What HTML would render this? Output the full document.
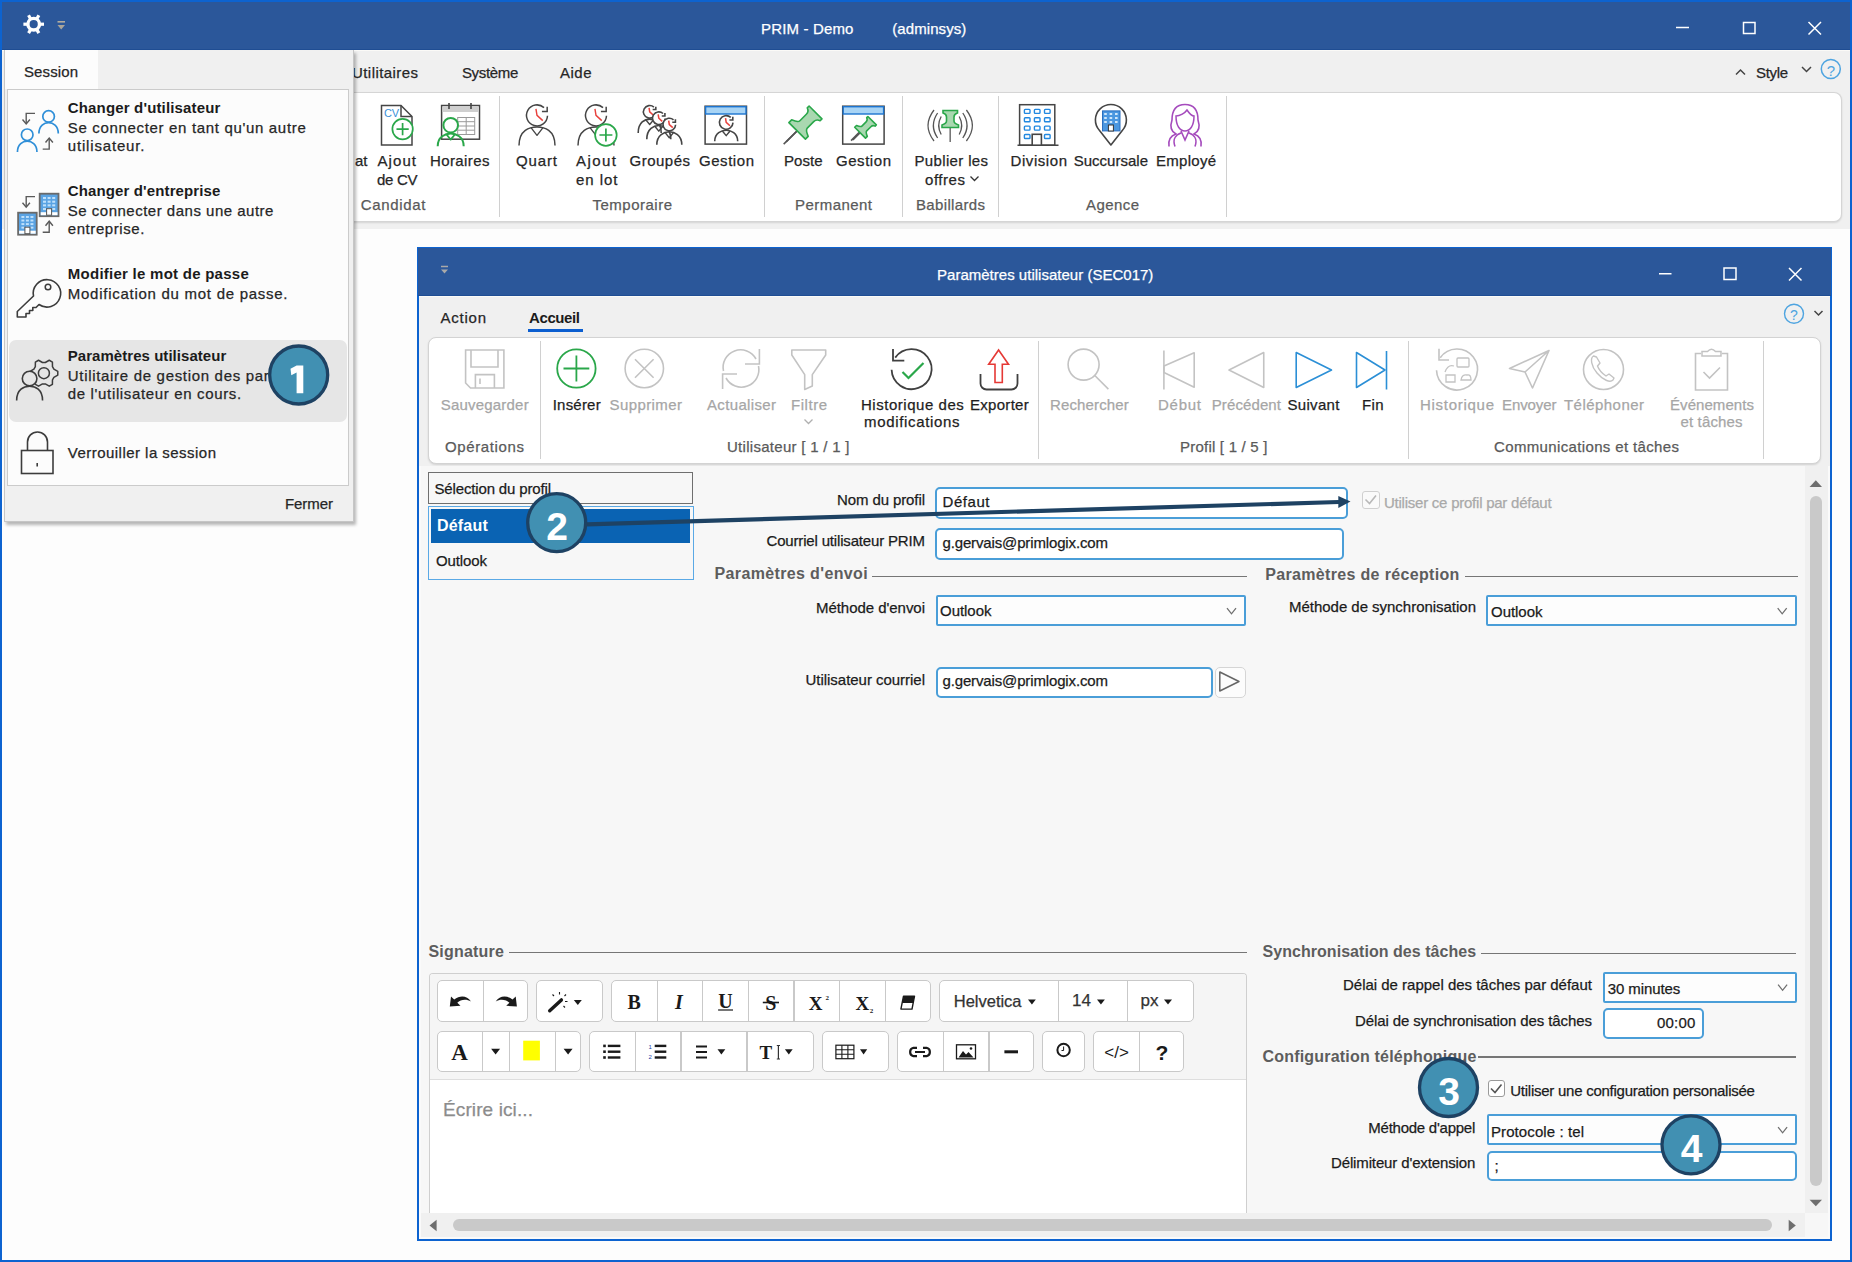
<!DOCTYPE html><html><head><meta charset="utf-8"><title>PRIM</title><style>
html,body{margin:0;padding:0;}
body{width:1852px;height:1262px;position:relative;overflow:hidden;background:#fdfdfd;font-family:"Liberation Sans",sans-serif;}
.t{position:absolute;white-space:nowrap;line-height:1;font-family:"Liberation Sans",sans-serif;}
.n{-webkit-text-stroke:0.25px currentColor;}
.r{position:absolute;box-sizing:border-box;}
.s{position:absolute;overflow:visible;}
</style></head><body>
<div class="r" style="left:0px;top:0px;width:1852px;height:1262px;background:#fdfdfd"></div>
<div class="r" style="left:0px;top:0px;width:1852px;height:50px;background:#2b579a"></div>
<div class="r" style="left:0px;top:50px;width:1852px;height:179px;background:#f0f0f0"></div>
<div class="r" style="left:0px;top:49px;width:1852px;height:1px;background:#1f4d93"></div>
<div class="r" style="left:0px;top:50px;width:1852px;height:1px;background:#fbfaf7"></div>
<div class="r" style="left:330px;top:92px;width:1512px;height:130px;background:#fff;border:1px solid #d5d5d5;border-left:none;border-radius:0 8px 8px 0;box-shadow:0 1px 2px rgba(0,0,0,.12)"></div>
<div class="t n" style="left:761.00px;top:21.30px;font-size:15px;font-weight:400;color:#fff;letter-spacing:0.154px;">PRIM - Demo</div>
<div class="t n" style="left:892.30px;top:21.30px;font-size:15px;font-weight:400;color:#fff;letter-spacing:0.071px;">(adminsys)</div>
<div class="t n" style="left:352.00px;top:64.80px;font-size:15px;font-weight:400;color:#262626;letter-spacing:0.433px;">Utilitaires</div>
<div class="t n" style="left:461.90px;top:64.80px;font-size:15px;font-weight:400;color:#262626;letter-spacing:-0.310px;">Système</div>
<div class="t n" style="left:560.00px;top:64.80px;font-size:15px;font-weight:400;color:#262626;letter-spacing:0.495px;">Aide</div>
<div class="t n" style="left:1756.00px;top:64.90px;font-size:15px;font-weight:400;color:#262626;letter-spacing:-0.336px;">Style</div>
<div class="t n" style="left:355.00px;top:153.30px;font-size:15px;font-weight:400;color:#262626;letter-spacing:0.000px;">at</div>
<div class="t n" style="left:377.50px;top:153.30px;font-size:15px;font-weight:400;color:#262626;letter-spacing:1.078px;">Ajout</div>
<div class="t n" style="left:376.90px;top:171.70px;font-size:15px;font-weight:400;color:#262626;letter-spacing:-0.272px;">de CV</div>
<div class="t n" style="left:430.00px;top:153.30px;font-size:15px;font-weight:400;color:#262626;letter-spacing:0.387px;">Horaires</div>
<div class="t n" style="left:516.00px;top:153.30px;font-size:15px;font-weight:400;color:#262626;letter-spacing:0.867px;">Quart</div>
<div class="t n" style="left:576.00px;top:153.30px;font-size:15px;font-weight:400;color:#262626;letter-spacing:1.453px;">Ajout</div>
<div class="t n" style="left:576.00px;top:171.80px;font-size:15px;font-weight:400;color:#262626;letter-spacing:0.959px;">en lot</div>
<div class="t n" style="left:629.50px;top:153.30px;font-size:15px;font-weight:400;color:#262626;letter-spacing:0.492px;">Groupés</div>
<div class="t n" style="left:699.00px;top:153.30px;font-size:15px;font-weight:400;color:#262626;letter-spacing:0.549px;">Gestion</div>
<div class="t n" style="left:784.00px;top:153.30px;font-size:15px;font-weight:400;color:#262626;letter-spacing:0.035px;">Poste</div>
<div class="t n" style="left:836.00px;top:153.30px;font-size:15px;font-weight:400;color:#262626;letter-spacing:0.549px;">Gestion</div>
<div class="t n" style="left:914.50px;top:153.30px;font-size:15px;font-weight:400;color:#262626;letter-spacing:0.347px;">Publier les</div>
<div class="t n" style="left:925.00px;top:171.80px;font-size:15px;font-weight:400;color:#262626;letter-spacing:0.547px;">offres</div>
<div class="t n" style="left:1010.50px;top:153.30px;font-size:15px;font-weight:400;color:#262626;letter-spacing:0.571px;">Division</div>
<div class="t n" style="left:1073.75px;top:153.30px;font-size:15px;font-weight:400;color:#262626;letter-spacing:0.005px;">Succursale</div>
<div class="t n" style="left:1156.00px;top:153.30px;font-size:15px;font-weight:400;color:#262626;letter-spacing:0.273px;">Employé</div>
<div class="t n" style="left:360.70px;top:196.60px;font-size:15px;font-weight:400;color:#5a5a5a;letter-spacing:0.679px;">Candidat</div>
<div class="t n" style="left:592.50px;top:196.80px;font-size:15px;font-weight:400;color:#5a5a5a;letter-spacing:0.495px;">Temporaire</div>
<div class="t n" style="left:795.00px;top:196.80px;font-size:15px;font-weight:400;color:#5a5a5a;letter-spacing:0.451px;">Permanent</div>
<div class="t n" style="left:916.00px;top:196.80px;font-size:15px;font-weight:400;color:#5a5a5a;letter-spacing:0.349px;">Babillards</div>
<div class="t n" style="left:1086.00px;top:196.80px;font-size:15px;font-weight:400;color:#5a5a5a;letter-spacing:0.425px;">Agence</div>
<div class="r" style="left:498.5px;top:96px;width:1.0px;height:121px;background:#d0d0d0"></div>
<div class="r" style="left:764px;top:96px;width:1px;height:121px;background:#d0d0d0"></div>
<div class="r" style="left:902px;top:96px;width:1px;height:121px;background:#d0d0d0"></div>
<div class="r" style="left:998px;top:96px;width:1px;height:121px;background:#d0d0d0"></div>
<div class="r" style="left:1225.5px;top:96px;width:1.0px;height:121px;background:#d0d0d0"></div>
<svg class="s" style="left:0;top:0" width="1852" height="1262"><path d="M381.5,105.5 H401 L412,116.5 V145 H381.5 Z" fill="#fff" stroke="#454545" stroke-width="1.5"/><path d="M401,105.5 V116.5 H412" fill="none" stroke="#454545" stroke-width="1.5"/><text x="384" y="117" font-family="Liberation Sans" font-size="11" fill="#3b8fd8" textLength="15">CV</text><circle cx="402.6" cy="129.1" r="10.2" fill="#fff" stroke="#2aa74a" stroke-width="1.7"/><path d="M396.48,129.1 H408.72 M402.6,122.97999999999999 V135.22" stroke="#2aa74a" stroke-width="1.7"/><rect x="441.6" y="105.5" width="37.9" height="33.7" fill="#fff" stroke="#454545" stroke-width="1.5"/><rect x="442.5" y="106.5" width="36" height="5.5" fill="#cfcfcf"/><path d="M449,103 V109 M471,103 V109" stroke="#454545" stroke-width="1.6"/><rect x="457.7" y="117.5" width="17" height="17" fill="#fff" stroke="#9a9a9a" stroke-width="1"/><path d="M466.2,117.5 V134.5 M457.7,121.7 H474.7 M457.7,126 H474.7 M457.7,130.2 H474.7" stroke="#9a9a9a" stroke-width="1"/><circle cx="450.7" cy="125.2" r="7.3" fill="#fff" stroke="#2aa74a" stroke-width="2"/><path d="M437.7,146.2 C437.7,136.5 445.5,133.5 450.7,133.5 C455.9,133.5 463.7,136.5 463.7,146.2" fill="none" stroke="#2aa74a" stroke-width="2"/><path d="M446.358,134.3 L450.7,139.636 L455.042,134.3" fill="none" stroke="#2aa74a" stroke-width="1.8" stroke-linejoin="round"/><circle cx="537" cy="115.4" r="10.5" fill="#fff" stroke="none"/><path d="M547.49,115.77 A10.5,10.5 0 1 1 544.03,107.60" fill="none" stroke="#454545" stroke-width="1.5"/><path d="M547.18,106.79 V111.62 H541.93" fill="none" stroke="#454545" stroke-width="1.5"/><path d="M535.95,108.89 L537.00,115.40 L542.77,120.65" fill="none" stroke="#e8413c" stroke-width="1.4249999999999998"/><path d="M519.0,145.5 C519.0,129.9 529.8,126.9 537,126.9 C544.2,126.9 555.0,129.9 555.0,145.5" fill="none" stroke="#454545" stroke-width="1.5"/><path d="M530.988,127.7 L537,135.39600000000002 L543.012,127.7" fill="none" stroke="#454545" stroke-width="1.35" stroke-linejoin="round"/><circle cx="596" cy="115.4" r="10.5" fill="#fff" stroke="none"/><path d="M606.49,115.77 A10.5,10.5 0 1 1 603.03,107.60" fill="none" stroke="#454545" stroke-width="1.5"/><path d="M606.18,106.79 V111.62 H600.93" fill="none" stroke="#454545" stroke-width="1.5"/><path d="M594.95,108.89 L596.00,115.40 L601.77,120.65" fill="none" stroke="#e8413c" stroke-width="1.4249999999999998"/><path d="M578.0,145.5 C578.0,129.9 588.8,126.9 596,126.9 C603.2,126.9 614.0,129.9 614.0,145.5" fill="none" stroke="#454545" stroke-width="1.5"/><path d="M589.988,127.7 L596,135.39600000000002 L602.012,127.7" fill="none" stroke="#454545" stroke-width="1.35" stroke-linejoin="round"/><circle cx="605.9" cy="135" r="10.8" fill="#fff" stroke="#2aa74a" stroke-width="1.7"/><path d="M599.42,135 H612.38 M605.9,128.52 V141.48" stroke="#2aa74a" stroke-width="1.7"/><circle cx="649.7" cy="111.8" r="6.3" fill="#fff" stroke="none"/><path d="M656.00,112.02 A6.3,6.3 0 1 1 653.92,107.12" fill="none" stroke="#454545" stroke-width="1.6"/><path d="M655.81,106.63 V109.53 H652.66" fill="none" stroke="#454545" stroke-width="1.6"/><path d="M649.07,107.89 L649.70,111.80 L653.17,114.95" fill="none" stroke="#e8413c" stroke-width="1.52"/><path d="M638.2,132.9 C638.2,122.1 645.1,119.1 649.7,119.1 C654.3000000000001,119.1 661.2,122.1 661.2,132.9" fill="none" stroke="#454545" stroke-width="1.6"/><path d="M645.859,119.89999999999999 L649.7,124.52799999999999 L653.541,119.89999999999999" fill="none" stroke="#454545" stroke-width="1.4400000000000002" stroke-linejoin="round"/><circle cx="658.8" cy="118.2" r="6.3" fill="#fff" stroke="none"/><path d="M665.10,118.42 A6.3,6.3 0 1 1 663.02,113.52" fill="none" stroke="#454545" stroke-width="1.6"/><path d="M664.91,113.03 V115.93 H661.76" fill="none" stroke="#454545" stroke-width="1.6"/><path d="M658.17,114.29 L658.80,118.20 L662.26,121.35" fill="none" stroke="#e8413c" stroke-width="1.52"/><path d="M646.8,139.2 C646.8,128.5 654.0,125.5 658.8,125.5 C663.5999999999999,125.5 670.8,128.5 670.8,139.2" fill="none" stroke="#454545" stroke-width="1.6"/><path d="M654.7919999999999,126.3 L658.8,131.164 L662.808,126.3" fill="none" stroke="#454545" stroke-width="1.4400000000000002" stroke-linejoin="round"/><circle cx="669.3" cy="124.5" r="6.3" fill="#fff" stroke="none"/><path d="M675.60,124.72 A6.3,6.3 0 1 1 673.52,119.82" fill="none" stroke="#454545" stroke-width="1.6"/><path d="M675.41,119.33 V122.23 H672.26" fill="none" stroke="#454545" stroke-width="1.6"/><path d="M668.67,120.59 L669.30,124.50 L672.76,127.65" fill="none" stroke="#e8413c" stroke-width="1.52"/><path d="M656.8,144.8 C656.8,134.8 664.3,131.8 669.3,131.8 C674.3,131.8 681.8,134.8 681.8,144.8" fill="none" stroke="#454545" stroke-width="1.6"/><path d="M665.125,132.60000000000002 L669.3,137.70000000000002 L673.4749999999999,132.60000000000002" fill="none" stroke="#454545" stroke-width="1.4400000000000002" stroke-linejoin="round"/><rect x="705.1" y="106.2" width="41.4" height="37.9" fill="#fff" stroke="#454545" stroke-width="1.5"/><rect x="705.6" y="106.7" width="40.4" height="7.3" fill="#a8d4f5" stroke="#1c74cf" stroke-width="1.4"/><circle cx="726.2" cy="122.4" r="6.8" fill="#fff" stroke="none"/><path d="M733.00,122.64 A6.8,6.8 0 1 1 730.75,117.35" fill="none" stroke="#454545" stroke-width="1.6"/><path d="M732.80,116.82 V119.95 H729.40" fill="none" stroke="#454545" stroke-width="1.6"/><path d="M725.52,118.18 L726.20,122.40 L729.94,125.80" fill="none" stroke="#e8413c" stroke-width="1.52"/><path d="M714.7,141.3 C714.7,133.20000000000002 721.6,130.20000000000002 726.2,130.20000000000002 C730.8000000000001,130.20000000000002 737.7,133.20000000000002 737.7,141.3" fill="none" stroke="#454545" stroke-width="1.6"/><path d="M722.359,131.00000000000003 L726.2,135.62800000000001 L730.041,131.00000000000003" fill="none" stroke="#454545" stroke-width="1.4400000000000002" stroke-linejoin="round"/><path d="M783.7,144.1 L797,131" stroke="#555" stroke-width="1.6"/><g transform="translate(804.5,123.5) rotate(45) scale(1.3)"><path d="M0,8 L0,20" stroke="#555" stroke-width="1.2307692307692308"/><path d="M-7,-12 H7 V-10 Q4,-9 4,-6 V1 Q4,3 9,5 V8 H-9 V5 Q-4,3 -4,1 V-6 Q-4,-9 -7,-10 Z" fill="#a9d8b0" stroke="#2aa74a" stroke-width="1.2307692307692308" stroke-linejoin="round"/></g><rect x="842.7" y="106.2" width="41.4" height="37.9" fill="#fff" stroke="#454545" stroke-width="1.5"/><rect x="843.2" y="106.7" width="40.4" height="7.3" fill="#a8d4f5" stroke="#1c74cf" stroke-width="1.4"/><path d="M851.1,140.6 L860,131.5" stroke="#555" stroke-width="1.6"/><g transform="translate(864.9,127.9) rotate(45) scale(0.85)"><path d="M0,8 L0,20" stroke="#555" stroke-width="1.8823529411764708"/><path d="M-7,-12 H7 V-10 Q4,-9 4,-6 V1 Q4,3 9,5 V8 H-9 V5 Q-4,3 -4,1 V-6 Q-4,-9 -7,-10 Z" fill="#a9d8b0" stroke="#2aa74a" stroke-width="1.8823529411764708" stroke-linejoin="round"/></g><path d="M950.2,127 V142" stroke="#777" stroke-width="1.6"/><path d="M943,110.5 H957.5 V113 Q954,114 954,117 V121 Q954,123.5 958.5,125 V127.5 H942 V125 Q946.5,123.5 946.5,121 V117 Q946.5,114 943,113 Z" fill="#a9d8b0" stroke="#2aa74a" stroke-width="1.6"/><path d="M941.2,116.5 Q936.2,125.5 941.2,134.5" fill="none" stroke="#555" stroke-width="1.3"/><path d="M959.2,116.5 Q964.2,125.5 959.2,134.5" fill="none" stroke="#555" stroke-width="1.3"/><path d="M937.6,113.0 Q929.1,125.5 937.6,138.0" fill="none" stroke="#555" stroke-width="1.3"/><path d="M962.8000000000001,113.0 Q971.3000000000001,125.5 962.8000000000001,138.0" fill="none" stroke="#555" stroke-width="1.3"/><path d="M934.0,110.0 Q922.0,125.5 934.0,141.0" fill="none" stroke="#555" stroke-width="1.3"/><path d="M966.4000000000001,110.0 Q978.4000000000001,125.5 966.4000000000001,141.0" fill="none" stroke="#555" stroke-width="1.3"/><rect x="1019.6" y="104.7" width="35.2" height="40.5" fill="#fff" stroke="#454545" stroke-width="1.5"/><path d="M1017.5,145.2 H1058.5" stroke="#454545" stroke-width="1.5"/><rect x="1024.4" y="109.4" width="5.6" height="4" rx="0.8" fill="#fff" stroke="#2188e0" stroke-width="1.4"/><rect x="1024.4" y="117.8" width="5.6" height="4" rx="0.8" fill="#fff" stroke="#2188e0" stroke-width="1.4"/><rect x="1024.4" y="126.1" width="5.6" height="4" rx="0.8" fill="#fff" stroke="#2188e0" stroke-width="1.4"/><rect x="1024.4" y="134.5" width="5.6" height="4" rx="0.8" fill="#fff" stroke="#2188e0" stroke-width="1.4"/><rect x="1034.4" y="109.4" width="5.6" height="4" rx="0.8" fill="#fff" stroke="#2188e0" stroke-width="1.4"/><rect x="1034.4" y="117.8" width="5.6" height="4" rx="0.8" fill="#fff" stroke="#2188e0" stroke-width="1.4"/><rect x="1034.4" y="126.1" width="5.6" height="4" rx="0.8" fill="#fff" stroke="#2188e0" stroke-width="1.4"/><rect x="1044.5" y="109.4" width="5.6" height="4" rx="0.8" fill="#fff" stroke="#2188e0" stroke-width="1.4"/><rect x="1044.5" y="117.8" width="5.6" height="4" rx="0.8" fill="#fff" stroke="#2188e0" stroke-width="1.4"/><rect x="1044.5" y="126.1" width="5.6" height="4" rx="0.8" fill="#fff" stroke="#2188e0" stroke-width="1.4"/><rect x="1044.5" y="134.5" width="5.6" height="4" rx="0.8" fill="#fff" stroke="#2188e0" stroke-width="1.4"/><rect x="1032.2" y="134.3" width="9.2" height="10.9" fill="#fff" stroke="#454545" stroke-width="1.6"/><path d="M1110.9,145 L1099.5,130.5 A15.5,15.5 0 1 1 1122.3,130.5 Z" fill="#fff" stroke="#454545" stroke-width="1.6" stroke-linejoin="round"/><rect x="1102.5" y="110.9" width="17.5" height="20" fill="#4b97e0" stroke="#2a6fc0" stroke-width="1"/><rect x="1104.2" y="113" width="2.6" height="2" fill="#cfe6fb"/><rect x="1104.2" y="117" width="2.6" height="2" fill="#cfe6fb"/><rect x="1104.2" y="121" width="2.6" height="2" fill="#cfe6fb"/><rect x="1109.6000000000001" y="113" width="2.6" height="2" fill="#cfe6fb"/><rect x="1109.6000000000001" y="117" width="2.6" height="2" fill="#cfe6fb"/><rect x="1109.6000000000001" y="121" width="2.6" height="2" fill="#cfe6fb"/><rect x="1115.0" y="113" width="2.6" height="2" fill="#cfe6fb"/><rect x="1115.0" y="117" width="2.6" height="2" fill="#cfe6fb"/><rect x="1115.0" y="121" width="2.6" height="2" fill="#cfe6fb"/><rect x="1108.4" y="125" width="5" height="6" fill="#fff" stroke="#333" stroke-width="1"/><path d="M1175,146.5 C1172,138 1176,135 1181,133 M1195,146.5 C1198,138 1194,135 1189,133 M1181,131 L1185,140 L1189,131" fill="none" stroke="#a54bbd" stroke-width="1.6"/><path d="M1169,146.5 C1168,140 1170,136 1176,134 C1170,131 1170,126 1172,120 C1172,108 1178,104.5 1185,104.5 C1192,104.5 1198,108 1198,120 C1200,126 1200,131 1194,134 C1200,136 1202,140 1201,146.5" fill="none" stroke="#a54bbd" stroke-width="1.6"/><path d="M1176,116 C1180,116 1185,113 1187,110 C1189,113 1192,116 1194,116 C1194,126 1190,131 1185,131 C1180,131 1176,126 1176,116 Z" fill="none" stroke="#a54bbd" stroke-width="1.5"/><path d="M970.5,176.5 L974.5,180.5 L978.5,176.5" fill="none" stroke="#333" stroke-width="1.3"/><path d="M1736,74.5 L1740.5,70 L1745,74.5" fill="none" stroke="#444" stroke-width="1.5"/><path d="M1802,67 L1806.5,71.5 L1811,67" fill="none" stroke="#444" stroke-width="1.5"/><circle cx="1830.8" cy="69" r="9.5" fill="none" stroke="#4ea4e0" stroke-width="1.5"/><text x="1830.8" y="75.5" text-anchor="middle" font-family="Liberation Sans" font-size="15" fill="#4ea4e0">?</text><path d="M1676,27.5 H1689" stroke="#fff" stroke-width="1.5"/><rect x="1743.5" y="22.5" width="11.5" height="11" fill="none" stroke="#fff" stroke-width="1.5"/><path d="M1808.5,22 L1821,34.5 M1821,22 L1808.5,34.5" stroke="#fff" stroke-width="1.5"/><g transform="translate(33.7,24.2)"><rect x="-1.6" y="-10.3" width="3.2" height="4.5" transform="rotate(30)" fill="#fff"/><rect x="-1.6" y="-10.3" width="3.2" height="4.5" transform="rotate(90)" fill="#fff"/><rect x="-1.6" y="-10.3" width="3.2" height="4.5" transform="rotate(150)" fill="#fff"/><rect x="-1.6" y="-10.3" width="3.2" height="4.5" transform="rotate(210)" fill="#fff"/><rect x="-1.6" y="-10.3" width="3.2" height="4.5" transform="rotate(270)" fill="#fff"/><rect x="-1.6" y="-10.3" width="3.2" height="4.5" transform="rotate(330)" fill="#fff"/><circle r="5.8" fill="none" stroke="#fff" stroke-width="3.4"/></g><path d="M57.5,21.8 H65" stroke="#b3ad9f" stroke-width="1.6"/><path d="M57.5,25 L61.2,29.5 L65,25 Z" fill="#a9a49a"/></svg>
<div class="r" style="left:4px;top:50px;width:350px;height:472px;background:#f0f0f0;border:1px solid #c6c6c6;border-top:none;box-shadow:2px 3px 3px rgba(0,0,0,.28)"></div>
<div class="r" style="left:5px;top:50px;width:93px;height:39px;background:#fcfcfc"></div>
<div class="r" style="left:7px;top:89px;width:342px;height:397px;background:#fcfcfc;border:1px solid #cbcbcb"></div>
<div class="r" style="left:9px;top:339.5px;width:338px;height:82.0px;background:#e6e6e6;border-radius:7px"></div>
<div class="t n" style="left:24.00px;top:64.30px;font-size:15px;font-weight:400;color:#262626;letter-spacing:0.107px;">Session</div>
<div class="t" style="left:67.80px;top:100.30px;font-size:15px;font-weight:700;color:#1b1b1b;letter-spacing:0.159px;">Changer d&#x27;utilisateur</div>
<div class="t n" style="left:67.80px;top:120.30px;font-size:15px;font-weight:400;color:#262626;letter-spacing:0.669px;">Se connecter en tant qu&#x27;un autre</div>
<div class="t n" style="left:67.80px;top:137.60px;font-size:15px;font-weight:400;color:#262626;letter-spacing:0.823px;">utilisateur.</div>
<div class="t" style="left:67.80px;top:183.30px;font-size:15px;font-weight:700;color:#1b1b1b;letter-spacing:0.123px;">Changer d&#x27;entreprise</div>
<div class="t n" style="left:67.80px;top:203.30px;font-size:15px;font-weight:400;color:#262626;letter-spacing:0.500px;">Se connecter dans une autre</div>
<div class="t n" style="left:67.80px;top:220.50px;font-size:15px;font-weight:400;color:#262626;letter-spacing:0.571px;">entreprise.</div>
<div class="t" style="left:67.80px;top:266.30px;font-size:15px;font-weight:700;color:#1b1b1b;letter-spacing:0.257px;">Modifier le mot de passe</div>
<div class="t n" style="left:67.80px;top:285.90px;font-size:15px;font-weight:400;color:#262626;letter-spacing:0.731px;">Modification du mot de passe.</div>
<div class="t" style="left:67.80px;top:348.30px;font-size:15px;font-weight:700;color:#1b1b1b;letter-spacing:0.042px;">Paramètres utilisateur</div>
<div class="t n" style="left:67.80px;top:367.90px;font-size:15px;font-weight:400;color:#262626;letter-spacing:0.686px;">Utilitaire de gestion des par</div>
<div class="t n" style="left:67.80px;top:386.30px;font-size:15px;font-weight:400;color:#262626;letter-spacing:0.650px;">de l&#x27;utilisateur en cours.</div>
<div class="t n" style="left:67.80px;top:445.30px;font-size:15px;font-weight:400;color:#262626;letter-spacing:0.466px;">Verrouiller la session</div>
<div class="t n" style="left:285.00px;top:496.10px;font-size:15px;font-weight:400;color:#262626;letter-spacing:-0.069px;">Fermer</div>
<svg class="s" style="left:0;top:0" width="400" height="540"><path d="M35,113.4 H26.2 V123.5" fill="none" stroke="#5a5a5a" stroke-width="1.4"/><path d="M22.5,119.5 L26.2,124 L29.9,119.5" fill="none" stroke="#5a5a5a" stroke-width="1.4"/><path d="M42.7,149.1 H49.2 V138.5" fill="none" stroke="#5a5a5a" stroke-width="1.4"/><path d="M45.5,142.5 L49.2,138 L52.9,142.5" fill="none" stroke="#5a5a5a" stroke-width="1.4"/><circle cx="48.6" cy="116.4" r="5.8" fill="#fcfcfc" stroke="#2f8fd8" stroke-width="1.7"/><path d="M38.900000000000006,133.6 C38.900000000000006,125.7 44.332,122.7 48.6,122.7 C52.868,122.7 58.3,125.7 58.3,133.6" fill="none" stroke="#2f8fd8" stroke-width="1.7"/><circle cx="27.2" cy="134.8" r="5.8" fill="#fcfcfc" stroke="#2f8fd8" stroke-width="1.7"/><path d="M17.45,152 C17.45,144.10000000000002 22.91,141.10000000000002 27.2,141.10000000000002 C31.49,141.10000000000002 36.95,144.10000000000002 36.95,152" fill="none" stroke="#2f8fd8" stroke-width="1.7"/><path d="M35,196.60000000000002 H26.2 V206.7" fill="none" stroke="#5a5a5a" stroke-width="1.4"/><path d="M22.5,202.7 L26.2,207.2 L29.9,202.7" fill="none" stroke="#5a5a5a" stroke-width="1.4"/><path d="M42.7,232.3 H49.2 V221.7" fill="none" stroke="#5a5a5a" stroke-width="1.4"/><path d="M45.5,225.7 L49.2,221.2 L52.9,225.7" fill="none" stroke="#5a5a5a" stroke-width="1.4"/><rect x="39.7" y="193.7" width="18.799999999999997" height="22.5" fill="#5aa3e3" stroke="#6a6a6a" stroke-width="1.8"/><rect x="43.0" y="197.0" width="2.9999999999999987" height="2.0666666666666664" fill="#bfe0fb"/><rect x="43.0" y="200.66666666666666" width="2.9999999999999987" height="2.0666666666666664" fill="#bfe0fb"/><rect x="43.0" y="204.33333333333334" width="2.9999999999999987" height="2.0666666666666664" fill="#bfe0fb"/><rect x="43.0" y="208.0" width="2.9999999999999987" height="2.0666666666666664" fill="#bfe0fb"/><rect x="47.6" y="197.0" width="2.9999999999999987" height="2.0666666666666664" fill="#bfe0fb"/><rect x="47.6" y="200.66666666666666" width="2.9999999999999987" height="2.0666666666666664" fill="#bfe0fb"/><rect x="47.6" y="204.33333333333334" width="2.9999999999999987" height="2.0666666666666664" fill="#bfe0fb"/><rect x="47.6" y="208.0" width="2.9999999999999987" height="2.0666666666666664" fill="#bfe0fb"/><rect x="52.199999999999996" y="197.0" width="2.9999999999999987" height="2.0666666666666664" fill="#bfe0fb"/><rect x="52.199999999999996" y="200.66666666666666" width="2.9999999999999987" height="2.0666666666666664" fill="#bfe0fb"/><rect x="52.199999999999996" y="204.33333333333334" width="2.9999999999999987" height="2.0666666666666664" fill="#bfe0fb"/><rect x="52.199999999999996" y="208.0" width="2.9999999999999987" height="2.0666666666666664" fill="#bfe0fb"/><rect x="40.7" y="212.2" width="16.799999999999997" height="3" fill="#fff"/><rect x="46.6" y="208.7" width="5" height="6.5" fill="#fff" stroke="#555" stroke-width="1"/><rect x="18.1" y="212.7" width="18.6" height="22.0" fill="#5aa3e3" stroke="#6a6a6a" stroke-width="1.8"/><rect x="21.400000000000002" y="216.0" width="2.933333333333334" height="1.9555555555555553" fill="#bfe0fb"/><rect x="21.400000000000002" y="219.55555555555554" width="2.933333333333334" height="1.9555555555555553" fill="#bfe0fb"/><rect x="21.400000000000002" y="223.11111111111111" width="2.933333333333334" height="1.9555555555555553" fill="#bfe0fb"/><rect x="21.400000000000002" y="226.66666666666666" width="2.933333333333334" height="1.9555555555555553" fill="#bfe0fb"/><rect x="25.933333333333337" y="216.0" width="2.933333333333334" height="1.9555555555555553" fill="#bfe0fb"/><rect x="25.933333333333337" y="219.55555555555554" width="2.933333333333334" height="1.9555555555555553" fill="#bfe0fb"/><rect x="25.933333333333337" y="223.11111111111111" width="2.933333333333334" height="1.9555555555555553" fill="#bfe0fb"/><rect x="25.933333333333337" y="226.66666666666666" width="2.933333333333334" height="1.9555555555555553" fill="#bfe0fb"/><rect x="30.466666666666672" y="216.0" width="2.933333333333334" height="1.9555555555555553" fill="#bfe0fb"/><rect x="30.466666666666672" y="219.55555555555554" width="2.933333333333334" height="1.9555555555555553" fill="#bfe0fb"/><rect x="30.466666666666672" y="223.11111111111111" width="2.933333333333334" height="1.9555555555555553" fill="#bfe0fb"/><rect x="30.466666666666672" y="226.66666666666666" width="2.933333333333334" height="1.9555555555555553" fill="#bfe0fb"/><rect x="19.1" y="230.7" width="16.6" height="3" fill="#fff"/><rect x="24.900000000000002" y="227.2" width="5" height="6.5" fill="#fff" stroke="#555" stroke-width="1"/><path d="M33.5,296 L17.3,311.5 V317 H26 V313.5 H29.5 V310.5 H32.8 V307.5 H36 L39,304.5 A13.7,13.7 0 1 0 33.5,296 Z" fill="#fcfcfc" stroke="#3c3c3c" stroke-width="1.6" stroke-linejoin="round"/><circle cx="48" cy="287" r="2.8" fill="none" stroke="#3c3c3c" stroke-width="1.5"/><polygon points="57.78,371.37 57.78,375.03 53.88,377.33 52.47,379.77 52.42,384.31 49.26,386.13 45.31,383.91 42.49,383.91 38.54,386.13 35.38,384.31 35.33,379.77 33.92,377.33 30.02,375.03 30.02,371.37 33.92,369.07 35.33,366.63 35.38,362.09 38.54,360.27 42.49,362.49 45.31,362.49 49.26,360.27 52.42,362.09 52.47,366.63 53.88,369.07" fill="#e6e6e6" stroke="#3c3c3c" stroke-width="1.5" stroke-linejoin="round"/><circle cx="43.9" cy="373.2" r="5.5" fill="none" stroke="#3c3c3c" stroke-width="1.5"/><path d="M17.1,400.5 C17.1,391 22,386.8 30,386.8 C38,386.8 43,391 43,400.5 Z" fill="#e6e6e6" stroke="none"/><circle cx="29.6" cy="378.5" r="7.8" fill="#e6e6e6" stroke="none"/><circle cx="29.6" cy="378.5" r="7.3" fill="#e6e6e6" stroke="#3c3c3c" stroke-width="1.6"/><path d="M16.650000000000002,400.5 C16.650000000000002,389.3 23.902,386.3 29.6,386.3 C35.298,386.3 42.55,389.3 42.55,400.5" fill="none" stroke="#3c3c3c" stroke-width="1.6"/><path d="M27.5,450.5 V442 A10,10 0 0 1 47.5,442 V450.5" fill="none" stroke="#3c3c3c" stroke-width="1.6"/><rect x="21.5" y="450.5" width="31.5" height="23" fill="#fcfcfc" stroke="#3c3c3c" stroke-width="1.6"/><path d="M37.2,463 V466.5" stroke="#3c3c3c" stroke-width="1.6"/></svg>
<div class="r" style="left:417px;top:247px;width:1415px;height:994px;background:#fafafa;border:2px solid #0d63d0;border-top:1px solid #0d63d0"></div>
<div class="r" style="left:418px;top:248px;width:1413px;height:48px;background:#2b579a"></div>
<div class="r" style="left:419px;top:296px;width:1411px;height:170px;background:#f0f0f0"></div>
<div class="r" style="left:418px;top:295px;width:1413px;height:1px;background:#1f4d93"></div>
<div class="r" style="left:419px;top:296px;width:1411px;height:1px;background:#fbfaf7"></div>
<div class="r" style="left:427.5px;top:337px;width:1393.5px;height:127px;background:#fff;border:1px solid #d3d3d3;border-radius:8px;box-shadow:0 1px 2px rgba(0,0,0,.13)"></div>
<div class="r" style="left:421px;top:466px;width:1383.7px;height:747.4000000000001px;background:#f7f7f7"></div>
<div class="r" style="left:1804.7px;top:466px;width:23.299999999999955px;height:747.4000000000001px;background:#f0f0f0"></div>
<div class="r" style="left:420.6px;top:1213.4px;width:1384.1px;height:24.0px;background:#f0f0f0"></div>
<div class="r" style="left:1804.7px;top:1213.4px;width:23.299999999999955px;height:24.0px;background:#f7f7f7"></div>
<div class="t n" style="left:937.00px;top:267.00px;font-size:15px;font-weight:400;color:#fff;letter-spacing:0.015px;">Paramètres utilisateur (SEC017)</div>
<div class="t n" style="left:440.50px;top:310.30px;font-size:15px;font-weight:400;color:#262626;letter-spacing:0.762px;">Action</div>
<div class="t" style="left:529.00px;top:310.30px;font-size:15px;font-weight:700;color:#1b1b1b;letter-spacing:-0.393px;">Accueil</div>
<div class="r" style="left:527.7px;top:329px;width:55.299999999999955px;height:2.5px;background:#0b5ed0"></div>
<div class="r" style="left:539.5px;top:341px;width:1.0px;height:118px;background:#d0d0d0"></div>
<div class="r" style="left:1038px;top:341px;width:1px;height:118px;background:#d0d0d0"></div>
<div class="r" style="left:1408px;top:341px;width:1px;height:118px;background:#d0d0d0"></div>
<div class="r" style="left:1763px;top:341px;width:1px;height:118px;background:#d0d0d0"></div>
<div class="t n" style="left:440.70px;top:396.80px;font-size:15px;font-weight:400;color:#a6a6a6;letter-spacing:0.209px;">Sauvegarder</div>
<div class="t n" style="left:552.70px;top:396.80px;font-size:15px;font-weight:400;color:#1e1e1e;letter-spacing:0.216px;">Insérer</div>
<div class="t n" style="left:609.50px;top:396.80px;font-size:15px;font-weight:400;color:#a6a6a6;letter-spacing:0.412px;">Supprimer</div>
<div class="t n" style="left:707.00px;top:396.80px;font-size:15px;font-weight:400;color:#a6a6a6;letter-spacing:0.349px;">Actualiser</div>
<div class="t n" style="left:791.00px;top:396.80px;font-size:15px;font-weight:400;color:#a6a6a6;letter-spacing:0.534px;">Filtre</div>
<div class="t n" style="left:861.00px;top:396.80px;font-size:15px;font-weight:400;color:#1e1e1e;letter-spacing:0.528px;">Historique des</div>
<div class="t n" style="left:864.00px;top:414.30px;font-size:15px;font-weight:400;color:#1e1e1e;letter-spacing:0.663px;">modifications</div>
<div class="t n" style="left:970.00px;top:396.80px;font-size:15px;font-weight:400;color:#1e1e1e;letter-spacing:0.292px;">Exporter</div>
<div class="t n" style="left:1050.00px;top:396.80px;font-size:15px;font-weight:400;color:#a6a6a6;letter-spacing:0.134px;">Rechercher</div>
<div class="t n" style="left:1158.00px;top:396.80px;font-size:15px;font-weight:400;color:#a6a6a6;letter-spacing:0.742px;">Début</div>
<div class="t n" style="left:1211.75px;top:396.80px;font-size:15px;font-weight:400;color:#a6a6a6;letter-spacing:0.107px;">Précédent</div>
<div class="t n" style="left:1287.40px;top:396.80px;font-size:15px;font-weight:400;color:#1e1e1e;letter-spacing:0.328px;">Suivant</div>
<div class="t n" style="left:1362.00px;top:396.80px;font-size:15px;font-weight:400;color:#1e1e1e;letter-spacing:0.436px;">Fin</div>
<div class="t n" style="left:1420.00px;top:396.80px;font-size:15px;font-weight:400;color:#a6a6a6;letter-spacing:0.719px;">Historique</div>
<div class="t n" style="left:1502.00px;top:396.80px;font-size:15px;font-weight:400;color:#a6a6a6;letter-spacing:-0.089px;">Envoyer</div>
<div class="t n" style="left:1564.00px;top:396.80px;font-size:15px;font-weight:400;color:#a6a6a6;letter-spacing:0.457px;">Téléphoner</div>
<div class="t n" style="left:1670.00px;top:396.80px;font-size:15px;font-weight:400;color:#a6a6a6;letter-spacing:0.068px;">Événements</div>
<div class="t n" style="left:1680.50px;top:414.30px;font-size:15px;font-weight:400;color:#a6a6a6;letter-spacing:0.139px;">et tâches</div>
<div class="t n" style="left:445.00px;top:439.30px;font-size:15px;font-weight:400;color:#5a5a5a;letter-spacing:0.623px;">Opérations</div>
<div class="t n" style="left:727.00px;top:439.30px;font-size:15px;font-weight:400;color:#5a5a5a;letter-spacing:0.287px;">Utilisateur [ 1 / 1 ]</div>
<div class="t n" style="left:1180.00px;top:439.30px;font-size:15px;font-weight:400;color:#5a5a5a;letter-spacing:0.218px;">Profil [ 1 / 5 ]</div>
<div class="t n" style="left:1494.00px;top:439.30px;font-size:15px;font-weight:400;color:#5a5a5a;letter-spacing:0.357px;">Communications et tâches</div>
<svg class="s" style="left:0;top:0" width="1852" height="1262"><path d="M1659,273.75 H1671.5" stroke="#fff" stroke-width="1.5"/><rect x="1724" y="268" width="12" height="11.5" fill="none" stroke="#fff" stroke-width="1.5"/><path d="M1789,268 L1801.5,280.5 M1801.5,268 L1789,280.5" stroke="#fff" stroke-width="1.5"/><path d="M441,266.5 H448" stroke="#a9a9a9" stroke-width="1.5"/><path d="M441,269.5 L444.5,273.5 L448,269.5 Z" fill="#a9a9a9"/><circle cx="1794" cy="313.75" r="9.5" fill="none" stroke="#4ea4e0" stroke-width="1.4"/><text x="1794" y="320" text-anchor="middle" font-family="Liberation Sans" font-size="14" fill="#4ea4e0">?</text><path d="M1814.5,311 L1818.5,315 L1822.5,311" fill="none" stroke="#444" stroke-width="1.5"/><path d="M465.6,350 H503.9 V388 H470.5 L465.6,383 Z" fill="none" stroke="#c3c3c3" stroke-width="1.6"/><path d="M471,350 V367 H498 V350" fill="none" stroke="#c3c3c3" stroke-width="1.6"/><path d="M475.4,388 V374.6 H494.4 V388 M480,378.5 V384" fill="none" stroke="#c3c3c3" stroke-width="1.6"/><circle cx="576.4" cy="368.5" r="19.2" fill="none" stroke="#2aa74a" stroke-width="1.8"/><path d="M563.5,368.5 H589.3 M576.4,355.6 V381.4" stroke="#2aa74a" stroke-width="1.8"/><circle cx="644.3" cy="368.5" r="19.2" fill="none" stroke="#c3c3c3" stroke-width="1.6"/><path d="M635,359.2 L653.6,377.8 M653.6,359.2 L635,377.8" stroke="#c3c3c3" stroke-width="1.6"/><path d="M723.5,371 A17.5,17.5 0 0 1 756,359" fill="none" stroke="#c3c3c3" stroke-width="1.6"/><path d="M759.4,349 V364 H745" fill="none" stroke="#c3c3c3" stroke-width="1.6"/><path d="M758.5,366 A17.5,17.5 0 0 1 726,378" fill="none" stroke="#c3c3c3" stroke-width="1.6"/><path d="M722.6,389 V374 H737" fill="none" stroke="#c3c3c3" stroke-width="1.6"/><path d="M791.8,350 H825.7 V355 L812.3,374.6 V386 L804.7,389.5 V374.6 L791.8,355 Z" fill="none" stroke="#c3c3c3" stroke-width="1.6" stroke-linejoin="round"/><path d="M804.5,419.5 L808.5,423.5 L812.5,419.5" fill="none" stroke="#b0b0b0" stroke-width="1.3"/><path d="M891.61,369.80 A20,20 0 1 0 895.22,357.63" fill="none" stroke="#404040" stroke-width="1.8"/><path d="M893,349 V360.6 H904.3" fill="none" stroke="#404040" stroke-width="1.8"/><path d="M902.5,372 L908.5,378 L923.5,363" fill="none" stroke="#2aa74a" stroke-width="2.2"/><path d="M980.5,374 V383.5 A6,6 0 0 0 986.5,389.5 H1011.5 A6,6 0 0 0 1017.5,383.5 V374" fill="none" stroke="#404040" stroke-width="1.8"/><path d="M998.6,350 L1008.5,364.3 H1002.3 V382.5 H995 V364.3 H988.7 Z" fill="#fff" stroke="#e53935" stroke-width="1.6" stroke-linejoin="miter"/><circle cx="1083.6" cy="364.6" r="15.5" fill="none" stroke="#c3c3c3" stroke-width="1.6"/><path d="M1094.8,375.5 L1108.4,389.1" stroke="#c3c3c3" stroke-width="1.6"/><path d="M1163.9,350.6 V389.6" stroke="#c3c3c3" stroke-width="1.6"/><path d="M1194.2,352.8 V387.2 L1164,372.5 V366 Z" fill="none" stroke="#c3c3c3" stroke-width="1.6" stroke-linejoin="round"/><path d="M1263.75,352.5 V387.5 L1229,370 Z" fill="none" stroke="#c3c3c3" stroke-width="1.6" stroke-linejoin="round"/><path d="M1296.2,352.5 V387.5 L1331.5,370 Z" fill="none" stroke="#2b8fd6" stroke-width="1.6" stroke-linejoin="round"/><path d="M1356.5,352.5 V387.5 L1385,370 Z" fill="none" stroke="#2b8fd6" stroke-width="1.6" stroke-linejoin="round"/><path d="M1386.5,351 V389.5" stroke="#2b8fd6" stroke-width="1.6"/><path d="M1436.51,370.22 A20.5,20.5 0 1 0 1440.21,357.74" fill="none" stroke="#c3c3c3" stroke-width="1.6"/><path d="M1439,348.75 V360 H1449" fill="none" stroke="#c3c3c3" stroke-width="1.6"/><rect x="1457" y="358" width="12" height="9" rx="1" fill="none" stroke="#c3c3c3" stroke-width="1.3"/><path d="M1445,372 q3,-8 9,-6 M1446,375 h9 v7 h-9 z M1461,380 q1,-6 6,-5 q4,-1 4,5 z" fill="none" stroke="#c3c3c3" stroke-width="1.3"/><path d="M1549,350.5 L1509.5,368.5 L1525,372 L1532.5,388 Z M1525,372 L1549,350.5" fill="none" stroke="#c3c3c3" stroke-width="1.6" stroke-linejoin="round"/><circle cx="1603.5" cy="369.5" r="20" fill="none" stroke="#c3c3c3" stroke-width="1.6"/><path d="M1593.5,356 C1590,358 1591,366 1597,373 C1603,380 1610,383 1613,380 L1614,378 L1609,374 L1606,376 C1603,374 1599,370 1597.5,366 L1600,363 L1596.5,357 Z" fill="none" stroke="#c3c3c3" stroke-width="1.4" stroke-linejoin="round"/><path d="M1701,353.5 H1695.5 V390 H1727.5 V353.5 H1722" fill="none" stroke="#c3c3c3" stroke-width="1.6"/><path d="M1702,356 V351.5 H1707.5 Q1711.5,347 1715.5,351.5 H1721 V356 Z" fill="#fff" stroke="#c3c3c3" stroke-width="1.5"/><path d="M1703.5,372 L1709.5,378 L1720,367.5" fill="none" stroke="#c3c3c3" stroke-width="1.6"/></svg>
<div class="r" style="left:428px;top:472px;width:265px;height:32.30000000000001px;border:1.5px solid #6f6f6f;background:#f7f7f7"></div>
<div class="t n" style="left:434.50px;top:481.00px;font-size:15px;font-weight:400;color:#1b1b1b;letter-spacing:-0.153px;">Sélection du profil</div>
<div class="r" style="left:428px;top:506px;width:265.6px;height:74px;border:1.5px solid #5aa9e6;background:#f7f7f7"></div>
<div class="r" style="left:431px;top:509.2px;width:259.29999999999995px;height:34.00000000000006px;background:#0a63b3"></div>
<div class="t" style="left:437.00px;top:518.46px;font-size:16px;font-weight:700;color:#fff;letter-spacing:0.188px;">Défaut</div>
<div class="t n" style="left:436.00px;top:553.30px;font-size:15px;font-weight:400;color:#1b1b1b;letter-spacing:-0.117px;">Outlook</div>
<div class="t n" style="left:837.00px;top:491.80px;font-size:15px;font-weight:400;color:#1b1b1b;letter-spacing:-0.102px;">Nom du profil</div>
<div class="t n" style="left:766.50px;top:533.30px;font-size:15px;font-weight:400;color:#1b1b1b;letter-spacing:-0.169px;">Courriel utilisateur PRIM</div>
<div class="t n" style="left:816.00px;top:599.80px;font-size:15px;font-weight:400;color:#1b1b1b;letter-spacing:-0.045px;">Méthode d&#x27;envoi</div>
<div class="t n" style="left:805.50px;top:671.90px;font-size:15px;font-weight:400;color:#1b1b1b;letter-spacing:-0.029px;">Utilisateur courriel</div>
<div class="r" style="left:935px;top:487px;width:413.4000000000001px;height:32px;border:2px solid #4a9ed8;border-radius:5px;background:#fff"></div>
<div class="t n" style="left:942.50px;top:493.60px;font-size:15px;font-weight:400;color:#1b1b1b;letter-spacing:0.559px;">Défaut</div>
<div class="r" style="left:935px;top:528.2px;width:409px;height:32.0px;border:2px solid #4a9ed8;border-radius:5px;background:#fff"></div>
<div class="t n" style="left:942.50px;top:534.80px;font-size:15px;font-weight:400;color:#1b1b1b;letter-spacing:-0.143px;">g.gervais@primlogix.com</div>
<div class="r" style="left:1362px;top:491px;width:17.5px;height:17.5px;border:1.5px solid #d0d0d0;border-radius:3px;background:#fafafa"></div>
<div class="t n" style="left:1384.00px;top:495.00px;font-size:15px;font-weight:400;color:#a9a9a9;letter-spacing:-0.239px;">Utiliser ce profil par défaut</div>
<div class="t" style="left:714.50px;top:566.46px;font-size:16px;font-weight:700;color:#5d5d5d;letter-spacing:0.364px;">Paramètres d&#x27;envoi</div>
<div class="r" style="left:872px;top:575.8px;width:375px;height:1.400000000000091px;background:#767676"></div>
<div class="t" style="left:1265.20px;top:567.16px;font-size:16px;font-weight:700;color:#5d5d5d;letter-spacing:0.336px;">Paramètres de réception</div>
<div class="r" style="left:1464.5px;top:575.8px;width:333.70000000000005px;height:1.400000000000091px;background:#767676"></div>
<div class="r" style="left:935.5px;top:594.7px;width:310.4000000000001px;height:31.799999999999955px;border:2px solid #4a9ed8;border-radius:2px;background:#fdfdfd"></div>
<div class="t n" style="left:940.00px;top:603.30px;font-size:15px;font-weight:400;color:#1b1b1b;letter-spacing:-0.034px;">Outlook</div>
<div class="t n" style="left:1289.00px;top:599.30px;font-size:15px;font-weight:400;color:#1b1b1b;letter-spacing:-0.026px;">Méthode de synchronisation</div>
<div class="r" style="left:1486.2px;top:594.8px;width:310.5px;height:31.700000000000045px;border:2px solid #4a9ed8;border-radius:2px;background:#fdfdfd"></div>
<div class="t n" style="left:1491.00px;top:604.30px;font-size:15px;font-weight:400;color:#1b1b1b;letter-spacing:-0.034px;">Outlook</div>
<div class="r" style="left:935.5px;top:666.5px;width:277.4000000000001px;height:31.5px;border:2px solid #4a9ed8;border-radius:5px;background:#fff"></div>
<div class="t n" style="left:942.50px;top:673.30px;font-size:15px;font-weight:400;color:#1b1b1b;letter-spacing:-0.143px;">g.gervais@primlogix.com</div>
<div class="r" style="left:1214.9px;top:666.6px;width:30.799999999999955px;height:31.0px;border:1.5px solid #d5d5d5;border-radius:5px;background:#fcfcfc"></div>
<div class="t" style="left:428.40px;top:943.96px;font-size:16px;font-weight:700;color:#5d5d5d;letter-spacing:0.220px;">Signature</div>
<div class="r" style="left:508.7px;top:951.8px;width:738.8px;height:1.400000000000091px;background:#767676"></div>
<div class="r" style="left:428.5px;top:972.5px;width:818.5px;height:240.9000000000001px;border:1.5px solid #cfcfcf;border-bottom:none;border-radius:4px 4px 0 0;background:#fff"></div>
<div class="r" style="left:430px;top:974px;width:815.5px;height:106.20000000000005px;background:#f5f5f5;border-bottom:1.5px solid #dedede;border-radius:3px 3px 0 0"></div>
<div class="t n" style="left:443.00px;top:1099.92px;font-size:19px;font-weight:400;color:#8c8c8c;letter-spacing:0.111px;">Écrire ici...</div>
<div class="t" style="left:1262.50px;top:944.46px;font-size:16px;font-weight:700;color:#5d5d5d;letter-spacing:0.045px;">Synchronisation des tâches</div>
<div class="r" style="left:1481px;top:952.8px;width:315px;height:1.400000000000091px;background:#767676"></div>
<div class="t n" style="left:1343.00px;top:976.80px;font-size:15px;font-weight:400;color:#1b1b1b;letter-spacing:-0.011px;">Délai de rappel des tâches par défaut</div>
<div class="r" style="left:1602.5px;top:972.3px;width:194.29999999999995px;height:30.40000000000009px;border:2px solid #4a9ed8;border-radius:2px;background:#fdfdfd"></div>
<div class="t n" style="left:1607.80px;top:980.70px;font-size:15px;font-weight:400;color:#1b1b1b;letter-spacing:-0.099px;">30 minutes</div>
<div class="t n" style="left:1355.00px;top:1013.10px;font-size:15px;font-weight:400;color:#1b1b1b;letter-spacing:-0.093px;">Délai de synchronisation des tâches</div>
<div class="r" style="left:1602.5px;top:1008.3px;width:101.79999999999995px;height:30.700000000000045px;border:2px solid #4a9ed8;border-radius:5px;background:#fff"></div>
<div class="t n" style="left:1657.00px;top:1014.80px;font-size:15px;font-weight:400;color:#1b1b1b;letter-spacing:0.213px;">00:00</div>
<div class="t" style="left:1262.50px;top:1048.66px;font-size:16px;font-weight:700;color:#5d5d5d;letter-spacing:0.198px;">Configuration téléphonique</div>
<div class="r" style="left:1478px;top:1056.3999999999999px;width:318px;height:1.400000000000091px;background:#767676"></div>
<div class="r" style="left:1487.9px;top:1080.4px;width:17.09999999999991px;height:17.09999999999991px;border:1.5px solid #9a9a9a;border-radius:3px;background:#fff"></div>
<div class="t n" style="left:1510.30px;top:1082.50px;font-size:15px;font-weight:400;color:#1b1b1b;letter-spacing:-0.256px;">Utiliser une configuration personalisée</div>
<div class="t n" style="left:1368.30px;top:1119.50px;font-size:15px;font-weight:400;color:#1b1b1b;letter-spacing:-0.248px;">Méthode d&#x27;appel</div>
<div class="r" style="left:1486.5px;top:1114.4px;width:310.29999999999995px;height:31.09999999999991px;border:2px solid #4a9ed8;border-radius:2px;background:#fdfdfd"></div>
<div class="t n" style="left:1491.00px;top:1123.80px;font-size:15px;font-weight:400;color:#1b1b1b;letter-spacing:0.090px;">Protocole : tel</div>
<div class="t n" style="left:1331.00px;top:1155.30px;font-size:15px;font-weight:400;color:#1b1b1b;letter-spacing:-0.134px;">Délimiteur d&#x27;extension</div>
<div class="r" style="left:1486.5px;top:1150.8px;width:310.29999999999995px;height:30.40000000000009px;border:2px solid #4a9ed8;border-radius:5px;background:#fff"></div>
<div class="t n" style="left:1494.50px;top:1158.30px;font-size:15px;font-weight:400;color:#1b1b1b;letter-spacing:0.000px;">;</div>
<div class="r" style="left:1810px;top:496px;width:12px;height:689.5px;background:#c9c9c9;border-radius:6px"></div>
<div class="r" style="left:453px;top:1219.2px;width:1319.3px;height:12.0px;background:#c9c9c9;border-radius:6px"></div>
<svg class="s" style="left:0;top:0" width="1852" height="1262"><path d="M1809.6,487 L1815.8,480.3 L1822,487 Z" fill="#6e6e6e"/><path d="M1809.6,1199.7 L1815.8,1206.3 L1822,1199.7 Z" fill="#6e6e6e"/><path d="M436.6,1219.7 L429.5,1225.5 L436.6,1231.2 Z" fill="#6e6e6e"/><path d="M1788.7,1219.7 L1795.8,1225.5 L1788.7,1231.2 Z" fill="#6e6e6e"/><path d="M1227.0,608.2 L1231.5,613.8 L1236.0,608.2" fill="none" stroke="#707070" stroke-width="1.3"/><path d="M1777.7,608.2 L1782.2,613.8 L1786.7,608.2" fill="none" stroke="#707070" stroke-width="1.3"/><path d="M1778.1,984.7 L1782.6,990.3 L1787.1,984.7" fill="none" stroke="#707070" stroke-width="1.3"/><path d="M1778.1,1127.2 L1782.6,1132.8 L1787.1,1127.2" fill="none" stroke="#707070" stroke-width="1.3"/><path d="M1219.8,672 V691 L1239,681.5 Z" fill="none" stroke="#666" stroke-width="1.5" stroke-linejoin="round"/><path d="M1365.5,499.5 L1369.5,503.5 L1376,495.5" fill="none" stroke="#b8b8b8" stroke-width="1.6"/><path d="M1491,1088.5 L1495,1092.5 L1501.5,1084.5" fill="none" stroke="#555" stroke-width="1.6"/></svg>
<div class="r" style="left:436.7px;top:980.4px;width:91.69999999999999px;height:41.60000000000002px;border:1.5px solid #c9c9c9;border-radius:5px;background:#fff"></div>
<div class="r" style="left:482.6px;top:981.4px;width:1.3000000000000114px;height:39.60000000000002px;background:#c9c9c9"></div>
<div class="r" style="left:536.3px;top:980.4px;width:66.70000000000005px;height:41.60000000000002px;border:1.5px solid #c9c9c9;border-radius:5px;background:#fff"></div>
<div class="r" style="left:611px;top:980.4px;width:319.5px;height:41.60000000000002px;border:1.5px solid #c9c9c9;border-radius:5px;background:#fff"></div>
<div class="r" style="left:656.8px;top:981.4px;width:1.2999999999999545px;height:39.60000000000002px;background:#c9c9c9"></div>
<div class="r" style="left:702.2px;top:981.4px;width:1.2999999999999545px;height:39.60000000000002px;background:#c9c9c9"></div>
<div class="r" style="left:748px;top:981.4px;width:1.2999999999999545px;height:39.60000000000002px;background:#c9c9c9"></div>
<div class="r" style="left:793.3px;top:981.4px;width:1.2999999999999545px;height:39.60000000000002px;background:#c9c9c9"></div>
<div class="r" style="left:838.9px;top:981.4px;width:1.2999999999999545px;height:39.60000000000002px;background:#c9c9c9"></div>
<div class="r" style="left:884.5px;top:981.4px;width:1.2999999999999545px;height:39.60000000000002px;background:#c9c9c9"></div>
<div class="r" style="left:938.5px;top:980.4px;width:255.5px;height:41.60000000000002px;border:1.5px solid #c9c9c9;border-radius:5px;background:#fff"></div>
<div class="r" style="left:1057.5px;top:981.4px;width:1.2999999999999545px;height:39.60000000000002px;background:#c9c9c9"></div>
<div class="r" style="left:1126.8px;top:981.4px;width:1.2999999999999545px;height:39.60000000000002px;background:#c9c9c9"></div>
<div class="r" style="left:436.7px;top:1030.7px;width:144.00000000000006px;height:40.899999999999864px;border:1.5px solid #c9c9c9;border-radius:5px;background:#fff"></div>
<div class="r" style="left:482px;top:1031.7px;width:1.3000000000000114px;height:38.899999999999864px;background:#c9c9c9"></div>
<div class="r" style="left:508.8px;top:1031.7px;width:1.3000000000000114px;height:38.899999999999864px;background:#c9c9c9"></div>
<div class="r" style="left:554.5px;top:1031.7px;width:1.2999999999999545px;height:38.899999999999864px;background:#c9c9c9"></div>
<div class="r" style="left:588.8px;top:1030.7px;width:225.4000000000001px;height:40.899999999999864px;border:1.5px solid #c9c9c9;border-radius:5px;background:#fff"></div>
<div class="r" style="left:634.6px;top:1031.7px;width:1.2999999999999545px;height:38.899999999999864px;background:#c9c9c9"></div>
<div class="r" style="left:680.3px;top:1031.7px;width:1.2999999999999545px;height:38.899999999999864px;background:#c9c9c9"></div>
<div class="r" style="left:746.4px;top:1031.7px;width:1.2999999999999545px;height:38.899999999999864px;background:#c9c9c9"></div>
<div class="r" style="left:822px;top:1030.7px;width:66.70000000000005px;height:40.899999999999864px;border:1.5px solid #c9c9c9;border-radius:5px;background:#fff"></div>
<div class="r" style="left:897px;top:1030.7px;width:136.70000000000005px;height:40.899999999999864px;border:1.5px solid #c9c9c9;border-radius:5px;background:#fff"></div>
<div class="r" style="left:942.9px;top:1031.7px;width:1.2999999999999545px;height:38.899999999999864px;background:#c9c9c9"></div>
<div class="r" style="left:988.3px;top:1031.7px;width:1.2999999999999545px;height:38.899999999999864px;background:#c9c9c9"></div>
<div class="r" style="left:1042px;top:1030.7px;width:42.700000000000045px;height:40.899999999999864px;border:1.5px solid #c9c9c9;border-radius:5px;background:#fff"></div>
<div class="r" style="left:1093px;top:1030.7px;width:91px;height:40.899999999999864px;border:1.5px solid #c9c9c9;border-radius:5px;background:#fff"></div>
<div class="r" style="left:1139px;top:1031.7px;width:1.2999999999999545px;height:38.899999999999864px;background:#c9c9c9"></div>
<div class="t n" style="left:953.80px;top:992.53px;font-size:16.5px;font-weight:400;color:#333;letter-spacing:-0.020px;">Helvetica</div>
<div class="t n" style="left:1072.00px;top:992.11px;font-size:17px;font-weight:400;color:#333;letter-spacing:0.000px;">14</div>
<div class="t n" style="left:1140.50px;top:992.11px;font-size:17px;font-weight:400;color:#333;letter-spacing:0.000px;">px</div>
<svg class="s" style="left:0;top:0" width="1852" height="1262"><path d="M449.8,1006.4 L451,996.5 L454.2,999.6 C460,995 467,995.5 471,1001.5 C466.5,998.8 460.5,999.5 457.3,1002.7 L460.5,1005.8 Z" fill="#1a1a1a"/><path d="M516.9,1006.4 L515.7,996.5 L512.5,999.6 C506.7,995 499.7,995.5 495.7,1001.5 C500.2,998.8 506.2,999.5 509.4,1002.7 L506.2,1005.8 Z" fill="#1a1a1a"/><path d="M549.7,1010.8 L561.4,999.9" stroke="#1a1a1a" stroke-width="3.4" stroke-linecap="round"/><path d="M559.5,992 V994.5 M552.5,994.5 L554,996 M566,994.5 L564.5,996 M565,1001.5 H567.5 M565,1007.5 L563.5,1006" stroke="#1a1a1a" stroke-width="1.1"/><path d="M573.8,999.9 H581.8 L577.8,1005 Z" fill="#1a1a1a"/><text x="634.2" y="1009.3" text-anchor="middle" font-family="Liberation Serif" font-size="20" font-weight="bold" font-style="normal" fill="#1a1a1a">B</text><text x="679" y="1009.3" text-anchor="middle" font-family="Liberation Serif" font-size="20" font-weight="bold" font-style="italic" fill="#1a1a1a">I</text><text x="725.5" y="1008" text-anchor="middle" font-family="Liberation Serif" font-size="20" font-weight="bold" font-style="normal" fill="#1a1a1a">U</text><path d="M718.1,1010 H733" stroke="#1a1a1a" stroke-width="1.2"/><text x="770.9" y="1009.5" text-anchor="middle" font-family="Liberation Serif" font-size="20" font-weight="bold" font-style="normal" fill="#1a1a1a">S</text><path d="M762.8,1002.5 H779" stroke="#1a1a1a" stroke-width="1.6"/><text x="815.7" y="1009.7" text-anchor="middle" font-family="Liberation Serif" font-size="19" font-weight="bold" font-style="normal" fill="#1a1a1a">X</text><text x="827.3" y="1000" text-anchor="middle" font-family="Liberation Serif" font-size="7" font-weight="bold" font-style="normal" fill="#1a1a1a">2</text><text x="862.4" y="1009.7" text-anchor="middle" font-family="Liberation Serif" font-size="19" font-weight="bold" font-style="normal" fill="#1a1a1a">X</text><text x="871.6" y="1012.5" text-anchor="middle" font-family="Liberation Serif" font-size="7" font-weight="bold" font-style="normal" fill="#1a1a1a">2</text><path d="M903.5,996.1 H914.5 L912,1009.1 H900.9 Z" fill="#fff" stroke="#1a1a1a" stroke-width="1.4" stroke-linejoin="round"/><path d="M903.5,996.1 H914.5 L913.2,1003 H902.3 Z" fill="#1a1a1a"/><path d="M1028,999.4 H1035.8 L1031.9,1004.4 Z" fill="#1a1a1a"/><path d="M1097,999.4 H1104.9 L1100.95,1004.4 Z" fill="#1a1a1a"/><path d="M1164,999.4 H1172 L1168.0,1004.4 Z" fill="#1a1a1a"/><text x="459.6" y="1060.4" text-anchor="middle" font-family="Liberation Serif" font-size="23" font-weight="bold" font-style="normal" fill="#1a1a1a">A</text><path d="M491.1,1048.7 H500.1 L495.6,1054.5 Z" fill="#1a1a1a"/><rect x="523.2" y="1040.7" width="16.7" height="19.7" fill="#ffff00"/><path d="M563.6,1048.7 H572.6 L568.1,1054.5 Z" fill="#1a1a1a"/><rect x="603.2" y="1044.6" width="2.6" height="2.6" fill="#1a1a1a"/><rect x="607.8" y="1044.7" width="12.6" height="2.4" fill="#1a1a1a"/><rect x="603.2" y="1050.3999999999999" width="2.6" height="2.6" fill="#1a1a1a"/><rect x="607.8" y="1050.5" width="12.6" height="2.4" fill="#1a1a1a"/><rect x="603.2" y="1056.2" width="2.6" height="2.6" fill="#1a1a1a"/><rect x="607.8" y="1056.3000000000002" width="12.6" height="2.4" fill="#1a1a1a"/><rect x="654.7" y="1044.7" width="11.6" height="2.4" fill="#1a1a1a"/><rect x="654.7" y="1050.5" width="11.6" height="2.4" fill="#1a1a1a"/><rect x="654.7" y="1056.3000000000002" width="11.6" height="2.4" fill="#1a1a1a"/><text x="648.5" y="1049" font-family="Liberation Sans" font-size="6" fill="#2244aa">1</text><text x="648.5" y="1059" font-family="Liberation Sans" font-size="6" fill="#2244aa">2</text><rect x="696" y="1045.5" width="11" height="2" fill="#1a1a1a"/><rect x="696" y="1051" width="11" height="2" fill="#1a1a1a"/><rect x="696" y="1056.5" width="11" height="2" fill="#1a1a1a"/><path d="M717.5,1049.3 H725.3 L721.4,1054.5 Z" fill="#1a1a1a"/><text x="765.8" y="1059" text-anchor="middle" font-family="Liberation Serif" font-size="19" font-weight="bold" font-style="normal" fill="#1a1a1a">T</text><path d="M778.4,1045.5 V1059 M776.8,1045.5 H780 M776.8,1059 H780" stroke="#333" stroke-width="1.2"/><path d="M784.9,1049.3 H792.7 L788.8,1054.5 Z" fill="#1a1a1a"/><rect x="835.9" y="1045.2" width="18" height="13.5" fill="none" stroke="#1a1a1a" stroke-width="1.2"/><path d="M841.9,1045.2 V1058.7 M847.9,1045.2 V1058.7 M835.9,1049.7 H853.9 M835.9,1054.2 H853.9" stroke="#1a1a1a" stroke-width="1.1"/><path d="M860,1049.3 H867.2 L863.6,1054.5 Z" fill="#1a1a1a"/><path d="M917,1047.8 H913.5 A4.3,4.3 0 0 0 913.5,1056.2 H917 M923,1047.8 H926.5 A4.3,4.3 0 0 1 926.5,1056.2 H923 M915,1052 H925" fill="none" stroke="#1a1a1a" stroke-width="2.2"/><rect x="956.5" y="1044.8" width="19" height="14" fill="none" stroke="#1a1a1a" stroke-width="1.3"/><path d="M958.5,1057.5 L963,1051 L966,1054.5 L968.5,1052 L973.5,1057.5 Z" fill="#1a1a1a"/><circle cx="971" cy="1048.5" r="1.3" fill="#1a1a1a"/><rect x="1004.4" y="1050.3" width="13.6" height="3" fill="#1a1a1a"/><circle cx="1063.6" cy="1050" r="6.2" fill="none" stroke="#1a1a1a" stroke-width="2"/><path d="M1063.6,1046.5 V1050.5 H1061.5" fill="none" stroke="#1a1a1a" stroke-width="1"/><text x="1116.6" y="1058.3" text-anchor="middle" font-family="Liberation Sans" font-size="17" fill="#1a1a1a">&lt;/&gt;</text><text x="1161.9" y="1060" text-anchor="middle" font-family="Liberation Sans" font-size="21" font-weight="bold" fill="#1a1a1a">?</text></svg>
<svg class="s" style="left:0;top:0" width="1852" height="1262"><path d="M587,524.3 L1339,502" stroke="#1e4263" stroke-width="4.2"/><path d="M1338.3,495.9 L1350.5,501.4 L1338.3,507.9 Z" fill="#1e4263"/><circle cx="298.7" cy="375" r="29" fill="#4190b2" stroke="#1e4263" stroke-width="3.3"/><path d="M296.6,365.5 H303.3 V393.3 H296.6 V372.5 L291.3,375.3 L290.5,368.8 Z" fill="#fff"/><circle cx="556.7" cy="522.7" r="29" fill="#4190b2" stroke="#1e4263" stroke-width="3.3"/><text x="557.2" y="540.0" text-anchor="middle" font-family="Liberation Sans" font-size="39" font-weight="bold" fill="#fff">2</text><circle cx="1448.5" cy="1087.5" r="29" fill="#4190b2" stroke="#1e4263" stroke-width="3.3"/><text x="1449.0" y="1104.8" text-anchor="middle" font-family="Liberation Sans" font-size="39" font-weight="bold" fill="#fff">3</text><circle cx="1691" cy="1144.8" r="29" fill="#4190b2" stroke="#1e4263" stroke-width="3.3"/><text x="1691.5" y="1162.1" text-anchor="middle" font-family="Liberation Sans" font-size="39" font-weight="bold" fill="#fff">4</text></svg>
<div class="r" style="left:0px;top:0px;width:1852px;height:1262px;border:2px solid #0d63d0;box-sizing:border-box;background:transparent"></div>
</body></html>
